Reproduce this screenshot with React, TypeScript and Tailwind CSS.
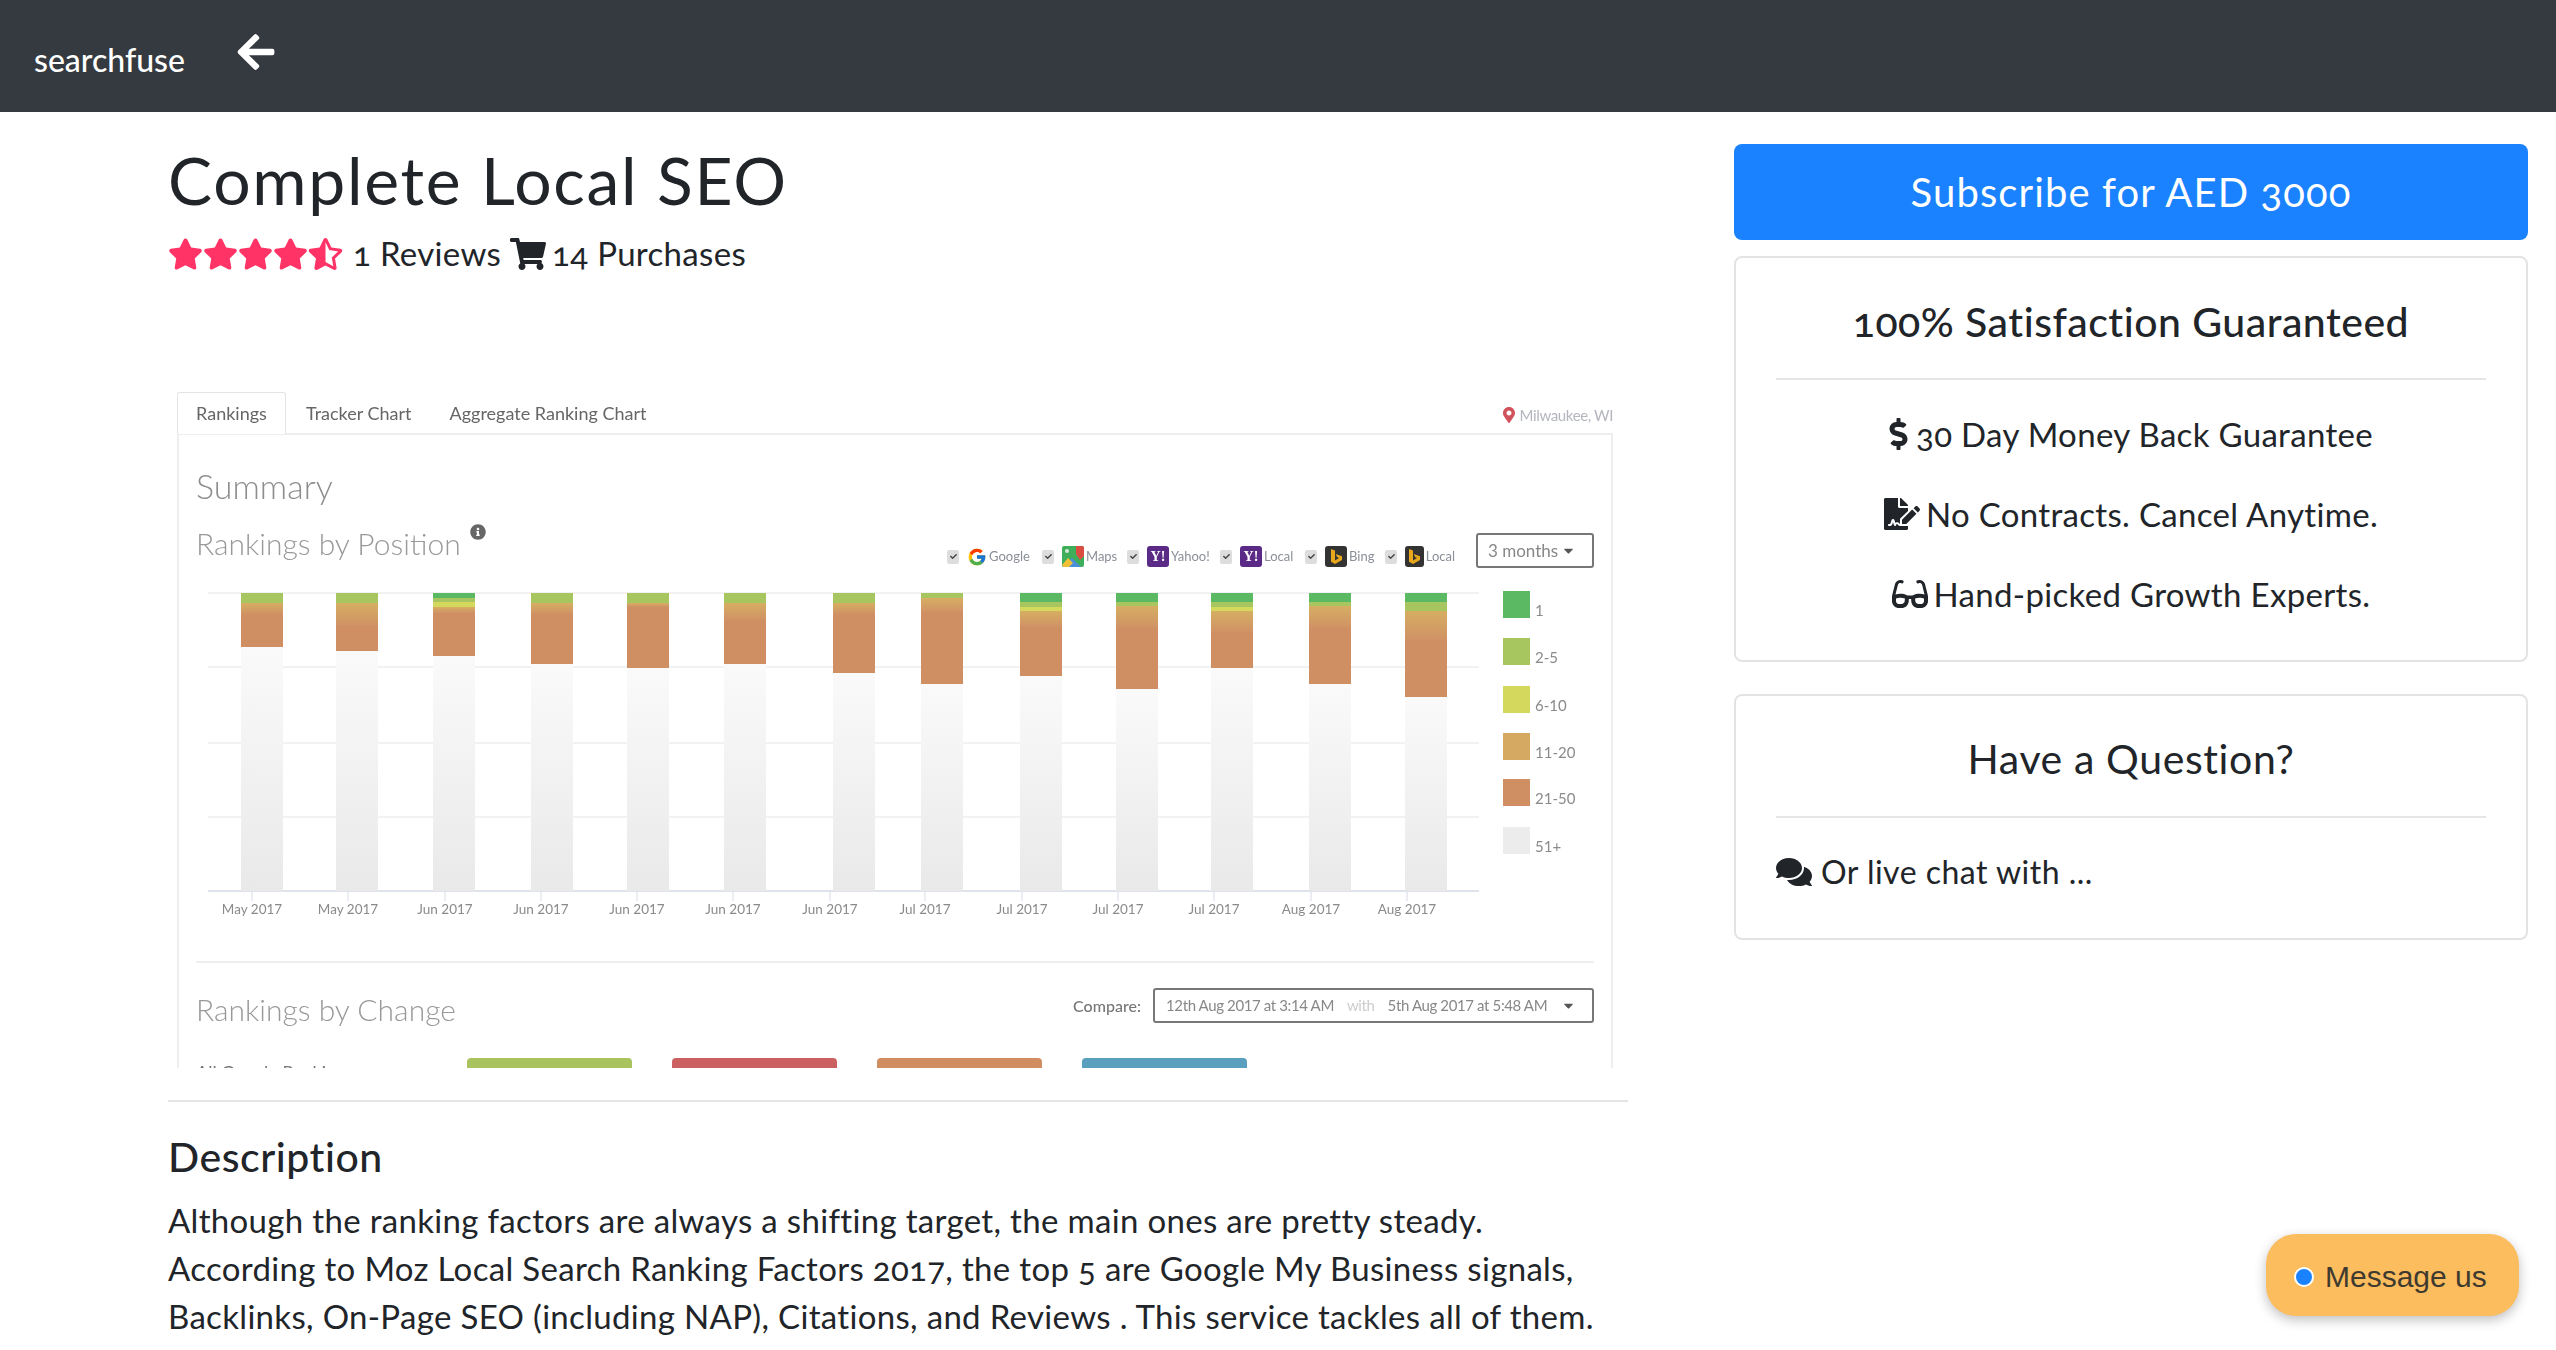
import {
  FaArrowLeft,
  FaStar,
  FaStarHalfAlt,
  FaShoppingCart,
  FaDollarSign,
  FaFileSignature,
  FaGlasses,
  FaComments,
  FaInfoCircle,
  FaMapMarkerAlt,
  FaCheck,
  FaCaretDown,
} from "react-icons/fa";
import { FcGoogle } from "react-icons/fc";

const BAR_COLORS = ["#5bb963", "#a8c660", "#d4d95e", "url(#tan)", "#d08f63"];

// each bar: left edge, then segment bottoms for 1, 2-5, 6-10, 11-20, 21-50
const BARS = [
  { x: 241, stops: [593, 603, 603, 614, 647], label: "May 2017", tick: 252 },
  { x: 336, stops: [593, 603, 603, 626, 651], label: "May 2017", tick: 348 },
  { x: 433, stops: [598, 602, 607, 613, 656], label: "Jun 2017", tick: 445 },
  { x: 531, stops: [593, 603, 603, 614, 664], label: "Jun 2017", tick: 541 },
  { x: 627, stops: [593, 603, 603, 607, 668], label: "Jun 2017", tick: 637 },
  { x: 724, stops: [593, 603, 603, 620, 664], label: "Jun 2017", tick: 733 },
  { x: 833, stops: [593, 603, 603, 614, 673], label: "Jun 2017", tick: 830 },
  { x: 921, stops: [593, 598, 598, 612, 684], label: "Jul 2017", tick: 925 },
  { x: 1020, stops: [602, 607, 611, 627, 676], label: "Jul 2017", tick: 1022 },
  { x: 1116, stops: [602, 606, 606, 628, 689], label: "Jul 2017", tick: 1118 },
  { x: 1211, stops: [602, 607, 611, 632, 668], label: "Jul 2017", tick: 1214 },
  { x: 1309, stops: [602, 606, 606, 628, 684], label: "Aug 2017", tick: 1311 },
  { x: 1405, stops: [602, 611, 611, 640, 697], label: "Aug 2017", tick: 1407 },
];

const LEGEND = [
  { y: 591, color: "#5bb963", label: "1" },
  { y: 638, color: "#a8c660", label: "2-5" },
  { y: 686, color: "#d4d95e", label: "6-10" },
  { y: 733, color: "#d5a962", label: "11-20" },
  { y: 779, color: "#d08f63", label: "21-50" },
  { y: 827, color: "#ececec", label: "51+" },
];

function FilterCheck() {
  return (
    <span className="flex h-[14px] w-[12px] items-center justify-center rounded-[2px] bg-[#dddddd]">
      <FaCheck className="text-[7px] text-[#444]" />
    </span>
  );
}

function YahooBadge() {
  return (
    <span className="flex h-[21px] w-[22px] items-center justify-center rounded-[3px] bg-[#5b2a86] font-['Liberation_Serif',serif] text-[14px] font-bold leading-none text-white">
      Y!
    </span>
  );
}

function BingBadge() {
  return (
    <span className="flex h-[21px] w-[22px] items-center justify-center rounded-[3px] bg-[#333333]">
      <svg width="14" height="18" viewBox="0 0 14 18">
        <path d="M2 1l4 1.4v10l4-2.3-2-1-1.2-3L13 8.200v3.800L6 16l-4-2.200z" fill="#e8a71c" />
      </svg>
    </span>
  );
}

function MapsBadge() {
  return (
    <svg width="22" height="21" viewBox="0 0 22 21">
      <rect width="22" height="21" rx="2" fill="#3fae5a" />
      <path d="M14 0h6a2 2 0 0 1 2 2v8l-4 4-4-6z" fill="#dc4d41" />
      <path d="M0 21l10-9 9 9z" fill="#4a90d9" />
      <path d="M6 12l5 5-4 4H2a2 2 0 0 1-2-2z" fill="#f2c037" />
      <circle cx="5" cy="5" r="2" fill="#d9e9d9" />
    </svg>
  );
}

function Filters() {
  const items = [
    { w: "w-[95px]", icon: <FcGoogle className="h-[20px] w-[20px]" />, label: "Google" },
    { w: "w-[85px]", icon: <MapsBadge />, label: "Maps" },
    { w: "w-[93px]", icon: <YahooBadge />, label: "Yahoo!" },
    { w: "w-[85px]", icon: <YahooBadge />, label: "Local" },
    { w: "w-[80px]", icon: <BingBadge />, label: "Bing" },
    { w: "w-[70px]", icon: <BingBadge />, label: "Local" },
  ];
  return (
    <div className="flex items-center">
      {items.map((item, i) => (
        <div key={i} className={`flex items-center gap-[2px] ${item.w}`}>
          <span className="mr-[6px]">
            <FilterCheck />
          </span>
          {item.icon}
          <span className="text-[13px] text-[#8a8f98]">{item.label}</span>
        </div>
      ))}
    </div>
  );
}

// stacked position chart, coordinates follow the panel's pixels
function PositionChart() {
  return (
    <svg width="1398" height="360" viewBox="196 568 1398 360" className="block">
      <defs>
        <linearGradient id="rest" x1="0" y1="0" x2="0" y2="1">
          <stop offset="0" stopColor="#fafafa" />
          <stop offset="1" stopColor="#e9e9e9" />
        </linearGradient>
        <linearGradient id="tan" x1="0" y1="0" x2="0" y2="1">
          <stop offset="0" stopColor="#d6ae62" />
          <stop offset="1" stopColor="#d09265" />
        </linearGradient>
      </defs>
      {[593, 667, 743, 817].map((y) => (
        <line key={y} x1="208" x2="1479" y1={y} y2={y} stroke="#eeeeee" strokeWidth="1.500" />
      ))}
      <line x1="208" x2="1479" y1="891" y2="891" stroke="#d5dbe6" strokeWidth="1.500" />
      {BARS.map((bar) => {
        let top = 593;
        const last = bar.stops[4];
        return (
          <g key={bar.x}>
            <rect x={bar.x} y={last} width="42" height={891 - last} fill="url(#rest)" />
            {bar.stops.map((stop, i) => {
              const rect = (
                <rect key={i} x={bar.x} y={top} width="42" height={stop - top} fill={BAR_COLORS[i]} />
              );
              top = stop;
              return rect;
            })}
            <line x1={bar.tick} x2={bar.tick} y1="891" y2="901" stroke="#d5dbe6" />
            <text x={bar.tick} y="914" textAnchor="middle" fontSize="13.500" fill="#8a8a8a" fontFamily="Lato, sans-serif">
              {bar.label}
            </text>
          </g>
        );
      })}
      {LEGEND.map((item) => (
        <g key={item.label}>
          <rect x="1503" y={item.y} width="27" height="27" fill={item.color} />
          <text x="1535" y={item.y + 25} fontSize="15" fill="#8a8a8a" fontFamily="Lato, sans-serif">
            {item.label}
          </text>
        </g>
      ))}
    </svg>
  );
}

function ChartShot() {
  return (
    <div className="h-[678px] overflow-hidden pl-[9px] font-['Lato',sans-serif] tracking-normal blur-[0.4px] [font-variant-numeric:lining-nums]">
      <div className="flex h-[43px] w-[1436px] items-end">
        <div className="-mb-[1px] flex h-[42px] w-[109px] items-center justify-center rounded-t-[3px] border border-b-0 border-[#e4e4e4] bg-white text-[18px] text-[#666]">
          Rankings
        </div>
        <span className="ml-[20px] h-[40px] text-[18px] leading-[40px] text-[#666]">Tracker Chart</span>
        <span className="ml-[38px] h-[40px] text-[18px] leading-[40px] text-[#666]">Aggregate Ranking Chart</span>
        <span className="ml-auto flex h-[36px] items-center gap-[3px] text-[15px] tracking-tight text-[#b3b6bd]">
          <FaMapMarkerAlt className="text-[16px] text-[#d0525c]" />
          Milwaukee, WI
        </span>
      </div>
      <div className="h-[640px] w-[1436px] overflow-hidden border-x-2 border-t-2 border-[#eeeeee] pl-[17px] pr-[17px] pt-[31px]">
        <div className="text-[34px] font-light leading-[40px] text-[#8d8d8d]">Summary</div>
        <div className="mt-[12px] flex h-[50px] items-end justify-between">
          <div className="flex self-start text-[30px] font-light leading-[50px] text-[#999]">
            Rankings by Position
            <FaInfoCircle className="ml-[9px] mt-[6px] text-[16px] text-[#666]" />
          </div>
          <div className="flex items-end">
            <div className="mb-[1px] mr-[21px]">
              <Filters />
            </div>
            <div className="flex h-[35px] w-[118px] items-center justify-between rounded-[3px] border-2 border-[#777] pl-[10px] pr-[16px] text-[17px] text-[#888]">
              3 months
              <FaCaretDown className="text-[15px] text-[#555]" />
            </div>
          </div>
        </div>
        <PositionChart />
        <div className="mt-[33px] border-t-2 border-[#eeeeee]" />
        <div className="flex items-start justify-between pt-[25px]">
          <div className="pt-[1px] text-[30px] font-light leading-[40px] text-[#999]">Rankings by Change</div>
          <div className="flex items-center">
            <span className="mr-[12px] text-[16px] font-medium text-[#777]">Compare:</span>
            <div className="flex h-[35px] w-[441px] items-center whitespace-nowrap rounded-[3px] border-2 border-[#777] pl-[11px] pr-[16px] text-[15px] tracking-tight text-[#888]">
              <span>12th Aug 2017 at 3:14 AM</span>
              <span className="ml-[13px] text-[#ccc]">with</span>
              <span className="ml-[13px]">5th Aug 2017 at 5:48 AM</span>
              <FaCaretDown className="ml-auto text-[15px] text-[#555]" />
            </div>
          </div>
        </div>
        <div className="mt-[29px] flex">
          <span className="mt-[1px] w-[271px] text-[18px] text-[#777]">All Google Rankings</span>
          <div className="flex gap-[40px]">
            <div className="h-[20px] w-[165px] rounded-t-[4px] bg-[#a9c45f]" />
            <div className="h-[20px] w-[165px] rounded-t-[4px] bg-[#cc5f5f]" />
            <div className="h-[20px] w-[165px] rounded-t-[4px] bg-[#cf8d60]" />
            <div className="h-[20px] w-[165px] rounded-t-[4px] bg-[#5a9fbd]" />
          </div>
        </div>
      </div>
    </div>
  );
}

export default function App() {
  return (
    <div className="relative h-[1350px] overflow-hidden bg-white font-['Lato',sans-serif] tracking-[0.02em] text-[#212529] [font-variant-numeric:oldstyle-nums]">
      {/* Top bar */}
      <nav className="flex h-[112px] items-start bg-[#343a40] pl-[34px] text-white">
        <span className="mt-[40px] text-[32px] font-medium leading-[40px] tracking-normal">searchfuse</span>
        <FaArrowLeft className="ml-[50px] mt-[31px] h-[42px] w-[42px]" />
      </nav>

      <div className="flex">
        {/* Main column */}
        <main className="ml-[168px] w-[1460px]">
          <h1 className="mt-[29px] text-[66px] leading-[77px] tracking-[0.026em]">Complete Local SEO</h1>
          <div className="mt-[12px] flex h-[48px] items-center text-[33px]">
            <span className="flex w-[185px] text-[#ff3366]">
              <FaStar className="h-[32px] w-[35px]" />
              <FaStar className="h-[32px] w-[35px]" />
              <FaStar className="h-[32px] w-[35px]" />
              <FaStar className="h-[32px] w-[35px]" />
              <FaStarHalfAlt className="h-[32px] w-[35px]" />
            </span>
            <span>1 Reviews</span>
            <FaShoppingCart className="ml-[9px] h-[32px] w-[36px]" />
            <span className="ml-[6px]">14 Purchases</span>
          </div>
          <div className="mt-[112px]">
            <ChartShot />
          </div>
          <hr className="mt-[32px] border-t-2 border-[#e5e5e5]" />
          <h2 className="mt-[31px] text-[41px] font-medium leading-[48px] tracking-[0.013em]">Description</h2>
          <p className="mt-[15px] whitespace-nowrap text-[33px] leading-[48px]">
            Although the ranking factors are always a shifting target, the main ones are pretty steady.
            <br />
            According to Moz Local Search Ranking Factors 2017, the top 5 are Google My Business signals,
            <br />
            Backlinks, On-Page SEO (including NAP), Citations, and Reviews . This service tackles all of them.
          </p>
        </main>

        {/* Side column */}
        <aside className="ml-[106px] w-[794px]">
          <button className="mt-[32px] h-[96px] w-full rounded-[8px] bg-[#1a82ff] text-[40px] tracking-[0.028em] text-white">
            Subscribe for AED 3000
          </button>
          <section className="mt-[16px] h-[406px] rounded-[8px] border-2 border-[#e3e3e3] px-[40px] text-center">
            <h3 className="mt-[40px] text-[41px] font-medium leading-[48px] tracking-[0.012em]">
              100% Satisfaction Guaranteed
            </h3>
            <hr className="mt-[32px] border-t-2 border-[#e5e5e5]" />
            <ul className="mt-[30px] space-y-[32px] text-[33px] leading-[48px]">
              <li className="flex items-center justify-center gap-[8px]">
                <FaDollarSign className="h-[32px] w-[19px]" />
                30 Day Money Back Guarantee
              </li>
              <li className="flex items-center justify-center gap-[6px]">
                <FaFileSignature className="text-[36px]" />
                No Contracts. Cancel Anytime.
              </li>
              <li className="flex items-center justify-center gap-[6px]">
                <FaGlasses className="text-[36px]" />
                Hand-picked Growth Experts.
              </li>
            </ul>
          </section>
          <section className="mt-[32px] h-[246px] rounded-[8px] border-2 border-[#e3e3e3] px-[40px]">
            <h3 className="mt-[39px] text-center text-[41px] leading-[48px] tracking-[0.015em]">Have a Question?</h3>
            <hr className="mt-[33px] border-t-2 border-[#e5e5e5]" />
            <div className="mt-[30px] flex items-center gap-[9px] text-[32px] leading-[48px] tracking-[0.015em]">
              <FaComments className="text-[36px]" />
              Or live chat with ...
            </div>
          </section>
        </aside>
      </div>

      {/* Floating chat button */}
      <button className="absolute bottom-[34px] right-[37px] flex h-[82px] w-[253px] items-center rounded-[30px] bg-[#fbbd5e] pl-[28px] pt-[3px] font-['Liberation_Sans',sans-serif] text-[30px] tracking-normal text-[#3f3a30] shadow-[0_4px_12px_rgba(0,0,0,0.25)]">
        <span className="mr-[11px] h-[20px] w-[20px] rounded-full border-2 border-white bg-[#1a82ff]" />
        Message us
      </button>
    </div>
  );
}
